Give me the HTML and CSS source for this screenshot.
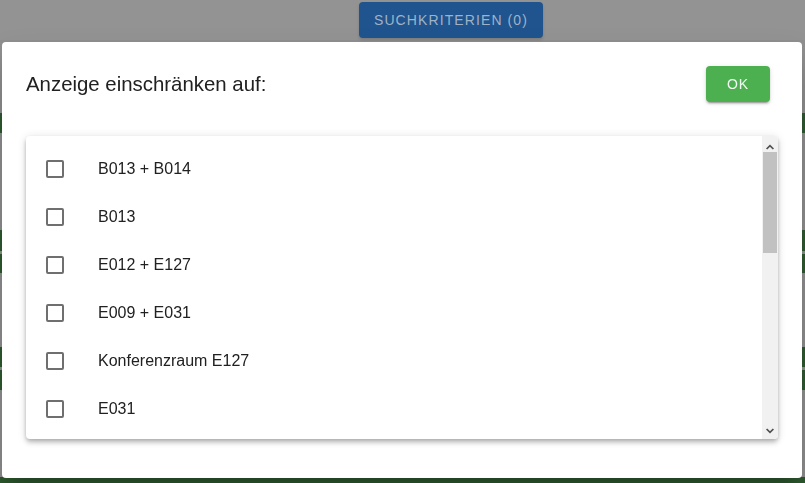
FILE: index.html
```html
<!DOCTYPE html>
<html lang="de">
<head>
<meta charset="utf-8">
<title>Anzeige einschränken</title>
<link rel="stylesheet" href="styles.css">
</head>
<body>
<div class="page">
  <header class="topbar">
    <button class="search-btn">Suchkriterien (0)</button>
  </header>
  <main class="rows">
    <div class="stripe s1"></div>
    <div class="stripe s2"></div>
    <div class="stripe s3"></div>
    <div class="stripe s4"></div>
    <div class="stripe s5"></div>
    <div class="stripe s6"></div>
  </main>
</div>

<div class="dialog" role="dialog">
  <div class="dialog-head">
    <h2 class="dialog-title">Anzeige einschränken auf:</h2>
    <button class="ok-btn">OK</button>
  </div>
  <div class="card">
    <div class="scroller">
      <ul class="list">
        <li class="item"><span class="box"></span><span class="label">B013 + B014</span></li>
        <li class="item"><span class="box"></span><span class="label">B013</span></li>
        <li class="item"><span class="box"></span><span class="label">E012 + E127</span></li>
        <li class="item"><span class="box"></span><span class="label">E009 + E031</span></li>
        <li class="item"><span class="box"></span><span class="label">Konferenzraum E127</span></li>
        <li class="item"><span class="box"></span><span class="label">E031</span></li>
        <li class="item"><span class="box"></span><span class="label">E009</span></li>
        <li class="item"><span class="box"></span><span class="label">E012</span></li>
        <li class="item"><span class="box"></span><span class="label">B014</span></li>
        <li class="item"><span class="box"></span><span class="label">E127</span></li>
        <li class="item"><span class="box"></span><span class="label">Foyer</span></li>
        <li class="item"><span class="box"></span><span class="label">Seminarraum B020</span></li>
        <li class="item"><span class="box"></span><span class="label">B020 + B021</span></li>
        <li class="item"><span class="box"></span><span class="label">B021</span></li>
        <li class="item"><span class="box"></span><span class="label">Aula</span></li>
        <li class="item"><span class="box"></span><span class="label">Mensa</span></li>
      </ul>
    </div>
    <div class="vscroll" aria-hidden="true">
      <div class="vs-btn">
        <svg width="16" height="16" viewBox="0 0 16 16"><path d="M4.6 13 L8 9.6 L11.4 13" fill="none" stroke="#505050" stroke-width="1.7"/></svg>
      </div>
      <div class="vs-track"><div class="vs-thumb"></div></div>
      <div class="vs-btn">
        <svg width="16" height="16" viewBox="0 0 16 16"><path d="M4.6 6 L8 9.4 L11.4 6" fill="none" stroke="#505050" stroke-width="1.7"/></svg>
      </div>
    </div>
  </div>
</div>
</body>
</html>
```

FILE: styles.css
```css
* { box-sizing: border-box; }

html, body {
  margin: 0;
  padding: 0;
  height: 100%;
  overflow: hidden;
}

body {
  background: #8f8f8f;
  font-family: "Liberation Sans", Arial, sans-serif;
}

.page {
  display: flex;
  flex-direction: column;
  height: 100%;
}

.topbar {
  display: flex;
  justify-content: center;
  padding: 2px 0 0 0;
  height: 40px;
  background: #939393;
}

.search-btn {
  margin-left: 97px;
  width: 184px;
  height: 36px;
  border: none;
  border-radius: 4px;
  background: #20548e;
  color: #9fb2c7;
  font-family: "Liberation Sans", Arial, sans-serif;
  font-size: 14px;
  letter-spacing: 1.1px;
  text-transform: uppercase;
  box-shadow: 0 2px 3px rgba(0, 0, 0, 0.15);
}

.rows {
  display: flex;
  flex-direction: column;
}

.stripe {
  background: #2e5a2f;
  height: 20px;
}
.s1 { margin-top: 73px; height: 20px; }
.s2 { margin-top: 97px; height: 21px; }
.s3 { margin-top: 3px; height: 19px; }
.s4 { margin-top: 74px; height: 20px; }
.s5 { margin-top: 3px; height: 20px; }
.s6 { margin-top: 87px; height: 6px; }

.dialog {
  position: fixed;
  left: 2px;
  top: 42px;
  width: 800px;
  height: 436px;
  background: #ffffff;
  border-radius: 4px;
  padding: 24px 24px 0 24px;
  box-shadow: 0 11px 15px -7px rgba(0,0,0,.2), 0 24px 38px 3px rgba(0,0,0,.14);
}

.dialog-head {
  display: flex;
  align-items: center;
  justify-content: space-between;
  height: 36px;
}

.dialog-title {
  margin: 0;
  font-weight: 400;
  font-size: 20.4px;
  color: #212121;
  padding-top: 1px;
}

.ok-btn {
  width: 64px;
  height: 36px;
  margin-right: 8px;
  border: none;
  border-radius: 4px;
  background: #4caf50;
  color: #f1f8f1;
  font-family: "Liberation Sans", Arial, sans-serif;
  font-size: 14px;
  letter-spacing: 1px;
  box-shadow: 0 3px 1px -2px rgba(0,0,0,.2), 0 2px 2px 0 rgba(0,0,0,.14), 0 1px 5px 0 rgba(0,0,0,.12);
}

.card {
  position: relative;
  margin-top: 34px;
  height: 303px;
  border-radius: 4px;
  background: #fff;
  overflow: hidden;
  box-shadow: 0 2px 4px -1px rgba(0,0,0,.2), 0 4px 5px 0 rgba(0,0,0,.14), 0 1px 10px 0 rgba(0,0,0,.12);
}

.scroller {
  height: 100%;
  overflow-y: auto;
  padding-right: 16px;
  scrollbar-width: none;
}

.vscroll {
  position: absolute;
  top: 0;
  right: 0;
  bottom: 0;
  width: 16px;
  display: flex;
  flex-direction: column;
  background: #f1f1f1;
}

.vs-btn {
  height: 16px;
  flex: none;
}
.vs-btn svg { display: block; }

.vs-track {
  flex: 1;
  padding: 0 1px;
}

.vs-thumb {
  height: 101px;
  background: #c1c1c1;
}

.list {
  list-style: none;
  margin: 0;
  padding: 9px 0 8px 0;
}

.item {
  display: flex;
  align-items: center;
  height: 48px;
  padding-left: 20px;
}

.box {
  width: 18px;
  height: 18px;
  border: 2px solid #6f6f6f;
  border-radius: 2px;
  flex: none;
}

.label {
  margin-left: 34px;
  font-size: 16px;
  color: #212121;
}
```
